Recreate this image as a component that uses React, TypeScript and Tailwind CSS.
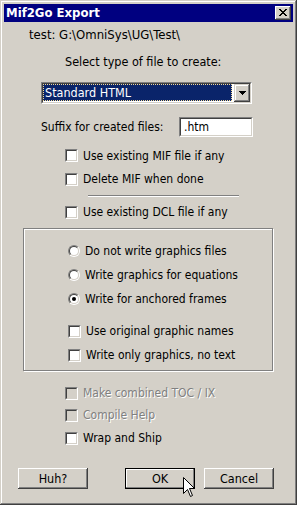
import type { ReactNode } from "react";

const font = "font-['DejaVu_Sans_Condensed','DejaVu_Sans',sans-serif]";

function CheckBox({ disabled }: { disabled?: boolean }) {
  return (
    <span className="block w-[13px] h-[13px] border border-t-[#808080] border-l-[#808080] border-b-white border-r-white shrink-0">
      <span
        className={`block w-full h-full border border-t-[#404040] border-l-[#404040] border-b-[#d4d0c8] border-r-[#d4d0c8] ${
          disabled ? "bg-[#d4d0c8]" : "bg-white"
        }`}
      />
    </span>
  );
}

function Radio({ checked }: { checked?: boolean }) {
  return (
    <span className="block w-[12px] h-[12px] rounded-full border border-t-[#808080] border-l-[#808080] border-b-white border-r-white shrink-0">
      <span className="flex items-center justify-center w-full h-full rounded-full border border-t-[#404040] border-l-[#404040] border-b-[#d4d0c8] border-r-[#d4d0c8] bg-white">
        {checked && <span className="block w-[4px] h-[4px] rounded-full bg-black" />}
      </span>
    </span>
  );
}

function Check({
  label,
  disabled,
  className,
}: {
  label: string;
  disabled?: boolean;
  className: string;
}) {
  return (
    <div className={`flex items-center ${className}`}>
      <CheckBox disabled={disabled} />
      <span
        className={`ml-[5px] whitespace-nowrap ${
          disabled ? "text-[#808080] [text-shadow:1px_1px_0_#ffffff]" : "text-black"
        }`}
      >
        {label}
      </span>
    </div>
  );
}

function Option({ label, checked }: { label: string; checked?: boolean }) {
  return (
    <div className="flex items-center h-[24px] ml-[44px]">
      <Radio checked={checked} />
      <span className="ml-[5px] whitespace-nowrap">{label}</span>
    </div>
  );
}

function Button({ children, main }: { children: ReactNode; main?: boolean }) {
  return (
    <div
      className={`flex items-center justify-center w-[70px] h-[21px] bg-[#d4d0c8] ${
        main
          ? "border border-black shadow-[inset_-1px_-1px_0_#808080,inset_1px_1px_0_#ffffff]"
          : "shadow-[inset_-1px_-1px_0_#404040,inset_1px_1px_0_#ffffff,inset_-2px_-2px_0_#808080,inset_2px_2px_0_#d4d0c8]"
      }`}
    >
      {children}
    </div>
  );
}

export default function App() {
  return (
    <div
      className={`relative w-[297px] h-[505px] bg-[#d4d0c8] p-[4px] text-[12px] leading-[14px] text-black ${font} shadow-[inset_-1px_-1px_0_#404040,inset_1px_1px_0_#d4d0c8,inset_-2px_-2px_0_#808080,inset_2px_2px_0_#ffffff]`}
    >
      {/* title bar */}
      <div className="flex items-center h-[18px] bg-[#000080] pl-[2px] pr-[2px]">
        <span className="text-[13px] font-bold text-white whitespace-nowrap">Mif2Go Export</span>
        <div className="ml-auto flex items-center justify-center w-[16px] h-[14px] bg-[#d4d0c8] shadow-[inset_-1px_-1px_0_#404040,inset_1px_1px_0_#ffffff,inset_-2px_-2px_0_#808080,inset_2px_2px_0_#d4d0c8]">
          <svg width="8" height="7" viewBox="0 0 8 7" shapeRendering="crispEdges" className="mb-[1px]">
            <path
              d="M0 0h2v1H0zM6 0h2v1H6zM1 1h2v1H1zM5 1h2v1H5zM2 2h4v1H2zM3 3h2v1H3zM2 4h4v1H2zM1 5h2v1H1zM5 5h2v1H5zM0 6h2v1H0zM6 6h2v1H6z"
              fill="#000"
            />
          </svg>
        </div>
      </div>

      <div className="flex flex-col items-start">
        <div className="mt-[6px] h-[14px] ml-[25px] text-[13px] whitespace-nowrap">{"test: G:\\OmniSys\\UG\\Test\\"}</div>
        <div className="mt-[13px] h-[14px] ml-[61px] text-[12.5px] whitespace-nowrap">Select type of file to create:</div>

        {/* combo */}
        <div className="mt-[13px] ml-[37px] w-[211px] h-[22px] border border-t-[#808080] border-l-[#808080] border-b-white border-r-white">
          <div className="flex w-full h-full border border-t-[#404040] border-l-[#404040] border-b-[#d4d0c8] border-r-[#d4d0c8] bg-white">
            <div className="flex items-center flex-1 h-[17px] bg-[#0a246a] border border-dotted border-[#f5db95] pl-[1px] text-[12.5px] text-white whitespace-nowrap">
              Standard HTML
            </div>
            <div className="flex items-center justify-center w-[16px] h-[18px] ml-[2px] bg-[#d4d0c8] shadow-[inset_-1px_-1px_0_#404040,inset_1px_1px_0_#d4d0c8,inset_-2px_-2px_0_#808080,inset_2px_2px_0_#ffffff]">
              <svg width="7" height="4" viewBox="0 0 7 4" shapeRendering="crispEdges">
                <path d="M0 0h7v1H0zM1 1h5v1H1zM2 2h3v1H2zM3 3h1v1H3z" fill="#000" />
              </svg>
            </div>
          </div>
        </div>

        {/* suffix */}
        <div className="mt-[13px] ml-[37px] flex items-center h-[20px]">
          <span className="w-[138px] whitespace-nowrap">Suffix for created files:</span>
          <div className="w-[74px] h-[20px] border border-t-[#808080] border-l-[#808080] border-b-white border-r-white">
            <div className="flex items-center w-full h-full border border-t-[#404040] border-l-[#404040] border-b-[#d4d0c8] border-r-[#d4d0c8] bg-white pl-[3px]">
              .htm
            </div>
          </div>
        </div>

        <Check className="mt-[7px] ml-[61px] h-[23px]" label="Use existing MIF file if any" />
        <Check className="ml-[61px] h-[24px]" label="Delete MIF when done" />
        <div className="mt-[4px] ml-[84px] w-[151px] h-[2px] border-t border-t-[#808080] border-b border-b-white" />
        <Check className="mt-[3px] ml-[61px] h-[24px]" label="Use existing DCL file if any" />

        {/* graphics group */}
        <div className="mt-[4px] ml-[19px] w-[250px] h-[143px] border border-[#808080] shadow-[inset_1px_1px_0_#ffffff,1px_1px_0_#ffffff] pt-[10px]">
          <Option label="Do not write graphics files" />
          <Option label="Write graphics for equations" />
          <Option label="Write for anchored frames" checked />
          <Check className="mt-[8px] ml-[44px] h-[24px]" label="Use original graphic names" />
          <Check className="ml-[44px] h-[24px]" label="Write only graphics, no text" />
        </div>

        <Check className="mt-[11px] ml-[61px] h-[22px]" label="Make combined TOC / IX" disabled />
        <Check className="ml-[61px] h-[22px]" label="Compile Help" disabled />
        <Check className="ml-[61px] h-[24px]" label="Wrap and Ship" />

        <div className="mt-[18px] ml-[14px] flex text-[12.5px]">
          <Button>Huh?</Button>
          <div className="ml-[37px]">
            <Button main>OK</Button>
          </div>
          <div className="ml-[9px]">
            <Button>Cancel</Button>
          </div>
        </div>
      </div>

      {/* mouse pointer */}
      <svg className="absolute left-[183px] top-[477px]" width="13" height="21" viewBox="0 0 13 21">
        <path
          d="M0.5 0.5 L0.5 16.5 L4.5 12.5 L7.5 19.5 L9.5 18.5 L6.5 11.5 L11.5 11.5 Z"
          fill="#fff"
          stroke="#000"
          strokeWidth="1"
        />
      </svg>
    </div>
  );
}
